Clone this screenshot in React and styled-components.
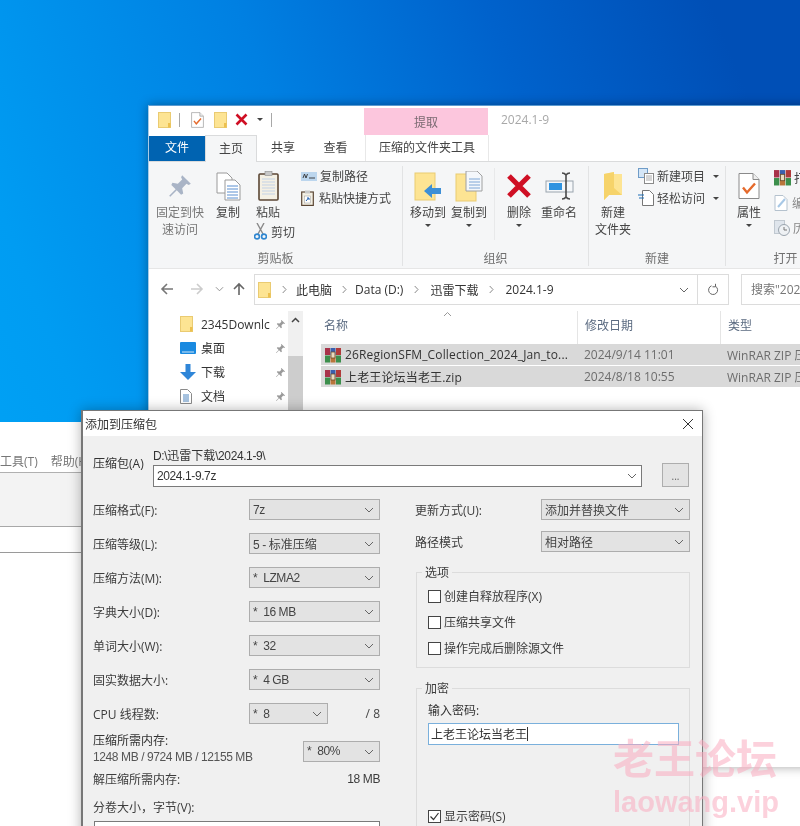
import { createGlobalStyle, styled } from 'styled-components'

const GlobalStyle = createGlobalStyle`
  html, body { margin: 0; padding: 0; background: #fff; }
  body { font-family: "Open Sans", "Noto Sans CJK SC", sans-serif; font-size: 12px; color: #333; }
  * { box-sizing: border-box; }
`

const Desktop = styled.div`
  position: relative;
  width: 800px;
  height: 826px;
  overflow: hidden;
  filter: blur(0.35px);
  background: linear-gradient(68deg, #00a8f8 0%, #009cf2 22%, #0080e2 50%, #0062cc 72%, #004fb6 92%);
`

/* windows sit on a free canvas, so these are the only placed boxes */
const BackWindow = styled.div`
  position: absolute;
  left: 0;
  top: 422px;
  width: 800px;
  height: 404px;
  background: #fff;
  padding-top: 30px;
`
const BackMenu = styled.div`
  display: flex;
  gap: 13px;
  height: 20px;
  line-height: 20px;
  color: #777;
  white-space: nowrap;
`
const BackToolbar = styled.div`
  height: 55px;
  background: #f3f3f3;
  border-top: 1px solid #b0b0b0;
  border-bottom: 1px solid #a8a8a8;
`
const BackInput = styled.div`
  height: 26px;
  border-bottom: 1px solid #9a9a9a;
`

const Explorer = styled.div`
  position: absolute;
  left: 148px;
  top: 105px;
  width: 700px;
  height: 662px;
  background: #fff;
  border-top: 1px solid #5b9ad0;
  border-left: 1px solid #a8cbe6;
  box-shadow: 0 0 10px rgba(0, 0, 0, 0.35);
`
const TitleRow = styled.div`
  display: flex;
  height: 29px;
`
const QuickBar = styled.div`
  width: 215px;
  display: flex;
  align-items: center;
  padding: 0 0 2px 9px;
`
const QuickItem = styled.span`
  display: flex;
  margin-left: ${p => p.$ml || 0}px;
`
const QuickSep = styled.span`
  width: 1px;
  height: 14px;
  background: #a8a8a8;
  margin-left: ${p => p.$ml}px;
`
const ExtractTab = styled.div`
  width: 124px;
  margin-top: 2px;
  background: #fcc6dd;
  color: #7a6a72;
  text-align: center;
  line-height: 29px;
`
const WindowTitle = styled.div`
  margin-left: 13px;
  line-height: 27px;
  color: #a8a8a8;
`
const TabRow = styled.div`
  display: flex;
  height: 26px;
`
const FileTab = styled.div`
  width: 56px;
  height: 25px;
  margin-top: 1px;
  background: #0063b1;
  color: #fff;
  text-align: center;
  line-height: 24px;
`
const Tab = styled.div`
  width: ${p => p.$w}px;
  margin-left: ${p => p.$ml || 0}px;
  text-align: center;
  line-height: 26px;
  color: #444;
  ${p => p.$active && 'background: #f5f6f7; border: 1px solid #dadbdc; border-bottom: 0; height: 27px;'}
  ${p => p.$tool && 'border-left: 1px solid #e8e8e8; border-right: 1px solid #e8e8e8;'}
`

const Ribbon = styled.div`
  display: flex;
  height: 108px;
  background: #f5f6f7;
  border-top: 1px solid #dadbdc;
  border-bottom: 1px solid #e6e6e6;
  padding-top: 4px;
`
const Group = styled.div`
  width: ${p => p.$w}px;
  height: 100px;
  flex-shrink: 0;
  border-right: 1px solid #e2e3e4;
  display: flex;
  flex-direction: column;
`
const GroupBody = styled.div`
  height: 85px;
  flex-shrink: 0;
  display: flex;
  padding: 2px 0 0 ${p => p.$pl || 0}px;
`
const GroupLabel = styled.div`
  line-height: 16px;
  text-align: center;
  color: #6f6f6f;
  white-space: nowrap;
`
const LargeButton = styled.div`
  width: ${p => p.$w}px;
  flex-shrink: 0;
  display: flex;
  flex-direction: column;
  align-items: center;
  text-align: center;
  line-height: 17px;
  color: ${p => (p.$off ? '#777' : '#444')};
  white-space: nowrap;
`
const IconBox = styled.div`
  height: 36px;
  width: 100%;
  display: flex;
  align-items: center;
  justify-content: center;
`
const Caret = styled.span`
  width: 0;
  height: 0;
  border-left: 3px solid transparent;
  border-right: 3px solid transparent;
  border-top: 3px solid #444;
  margin: ${p => p.$m || '0'};
  flex-shrink: 0;
`
const SoftSep = styled.div`
  width: 1px;
  height: 72px;
  background: #e8e9ea;
  margin: 0 4px 0 5px;
`
const PasteColumn = styled.div`
  width: 52px;
  flex-shrink: 0;
`
const SmallColumn = styled.div`
  margin: -3px 0 0 ${p => p.$ml || 0}px;
  display: flex;
  flex-direction: column;
`
const SmallRow = styled.div`
  height: ${p => p.$h || 22}px;
  display: flex;
  align-items: center;
  gap: ${p => p.$gap || 3}px;
  color: ${p => (p.$off ? '#888' : '#444')};
  white-space: nowrap;
`
const CutRow = styled(SmallRow)`
  margin: 2px 0 0 6px;
  height: 17px;
  gap: 4px;
`

const NavRow = styled.div`
  display: flex;
  height: 42px;
  padding-top: 5px;
`
const NavButtons = styled.div`
  width: 105px;
  height: 30px;
  flex-shrink: 0;
  display: flex;
  align-items: center;
  padding-left: 11px;
`
const NavIcon = styled.span`
  display: flex;
  margin-left: ${p => p.$ml || 0}px;
`
const AddressBar = styled.div`
  width: 444px;
  height: 31px;
  flex-shrink: 0;
  display: flex;
  align-items: center;
  border: 1px solid #dcdcdc;
  padding-left: 3px;
  color: #333;
  white-space: nowrap;
`
const Crumb = styled.span`
  margin-left: ${p => p.$ml}px;
`
const CrumbArrow = styled.svg`
  width: 5px;
  height: 9px;
  margin-left: ${p => p.$ml}px;
`
const AddressEnd = styled.div`
  margin-left: auto;
  width: 46px;
  height: 100%;
  display: flex;
  align-items: center;
  padding-left: 28px;
`
const RefreshBox = styled.div`
  width: 31px;
  height: 31px;
  flex-shrink: 0;
  display: flex;
  align-items: center;
  justify-content: center;
  border: 1px solid #dcdcdc;
  border-left: 0;
`
const SearchBox = styled.div`
  margin-left: 12px;
  width: 200px;
  height: 31px;
  flex-shrink: 0;
  border: 1px solid #dcdcdc;
  padding-left: 9px;
  line-height: 29px;
  color: #777;
`

const Main = styled.div`
  display: flex;
  height: 456px;
`
const NavPane = styled.div`
  width: 154px;
  display: flex;
  flex-shrink: 0;
`
const NavList = styled.div`
  width: 139px;
  padding: 1px 0 0 31px;
`
const NavItem = styled.div`
  height: 24px;
  display: grid;
  grid-template-columns: 21px 70px 1fr;
  align-items: center;
  color: #333;
`
const NavText = styled.span`
  overflow: hidden;
  white-space: nowrap;
`
const NavPin = styled.span`
  display: flex;
  justify-content: center;
  padding-left: 1px;
`
const Scrollbar = styled.div`
  width: 15px;
  background: #f0f0f0;
  padding-top: 6px;
`
const ScrollArrow = styled.svg`
  display: block;
  margin: 0 auto;
`
const ScrollThumb = styled.div`
  height: 90px;
  margin-top: 33px;
  background: #cdcdcd;
`
const FilePane = styled.div`
  margin-left: 18px;
  flex: 1;
`
const ColumnHead = styled.div`
  position: relative;
  display: grid;
  grid-template-columns: 256px 143px 1fr;
  height: 33px;
`
const HeadCell = styled.div`
  line-height: 30px;
  color: #5a6a80;
  padding-left: ${p => (p.$first ? 3 : 7)}px;
  ${p => !p.$first && 'border-left: 1px solid #e5e5e5;'}
`
const SortCaret = styled.svg`
  position: absolute;
  left: 122px;
  top: 0;
`
const FileRow = styled.div`
  display: grid;
  grid-template-columns: 256px 143px 1fr;
  align-items: center;
  height: 21px;
  margin-bottom: 1px;
  background: #d9d9d9;
  white-space: nowrap;
`
const FileName = styled.div`
  display: flex;
  align-items: center;
  gap: 4px;
  padding-left: 4px;
  color: #333;
  letter-spacing: 0.15px;
`
const FileMeta = styled.div`
  padding-left: 7px;
  color: #6d6d6d;
`

const Dialog = styled.div`
  position: absolute;
  left: 81px;
  top: 410px;
  width: 622px;
  height: 470px;
  background: #f0f0f0;
  border: 1px solid #777;
  border-left-width: 2px;
  box-shadow: 0 0 12px rgba(0, 0, 0, 0.3);
`
const DialogTitle = styled.div`
  height: 25px;
  background: #fff;
  display: flex;
  align-items: center;
  justify-content: space-between;
  padding: 0 8px 0 2px;
  color: #333;
`
const DialogBody = styled.div`
  padding: 11px 12px 0 10px;
`
/* the dialog's latin text runs narrower than the rest of the page */
const Num = styled.span`
  font-family: "Liberation Sans", sans-serif;
  font-size: 12px;
  letter-spacing: -0.4px;
`
const ArchiveHead = styled.div`
  display: flex;
  align-items: flex-end;
  margin-bottom: 12px;
`
const ArchiveLabel = styled.div`
  width: 60px;
  line-height: 17px;
  margin-bottom: 15px;
`
const ArchivePath = styled.div`
  width: 489px;
  line-height: 17px;
`
const PathText = styled.div`
  height: 18px;
`
const Field = styled.div`
  height: 22px;
  background: #fff;
  border: 1px solid #7a7a7a;
  display: flex;
  align-items: center;
  justify-content: space-between;
  padding: 0 4px 0 3px;
`
const BrowseButton = styled.div`
  width: 27px;
  height: 24px;
  margin-left: 20px;
  background: #e3e3e3;
  border: 1px solid #adadad;
  text-align: center;
  line-height: 24px;
  color: #666;
  font-size: 10px;
`
const Columns = styled.div`
  display: grid;
  grid-template-columns: 287px 275px;
  column-gap: 35px;
`
const OptionRow = styled.div`
  display: flex;
  align-items: center;
  height: 21px;
  margin-bottom: ${p => p.$mb ?? 13}px;
`
const OptionLabel = styled.div`
  width: ${p => p.$w}px;
  flex-shrink: 0;
  color: #3c3c3c;
`
const Select = styled.div`
  width: ${p => p.$w}px;
  height: 21px;
  flex-shrink: 0;
  background: #e3e3e3;
  border: 1px solid #adadad;
  display: flex;
  align-items: center;
  justify-content: space-between;
  padding: 0 5px 0 3px;
  color: #444;
  white-space: pre;
`
const ThreadMax = styled.div`
  margin-left: auto;
  color: #444;
`
const MemoryRow = styled.div`
  display: flex;
  justify-content: space-between;
  height: 31px;
  margin-top: -4px;
  line-height: 15.5px;
  white-space: nowrap;
`
const MemorySelect = styled(Select)`
  margin-top: 8px;
`
const MemoryValues = styled.div`
  color: #555;
`
const PlainRow = styled.div`
  display: flex;
  justify-content: space-between;
  line-height: 17px;
  margin-top: ${p => p.$mt}px;
  color: #3c3c3c;
`
const VolumeField = styled(Field)`
  margin: 5px 0 0 1px;
`
const Fieldset = styled.fieldset`
  margin: ${p => p.$mt}px 0 0 1px;
  padding: ${p => p.$pt}px 0 6px 11px;
  border: 1px solid #dcdcdc;
  min-width: 0;
`
const Legend = styled.legend`
  margin-left: -6px;
  padding: 0 3px;
  line-height: 17px;
  color: #3c3c3c;
`
const CheckRow = styled.div`
  display: flex;
  align-items: center;
  gap: 3px;
  height: 26px;
  margin-top: ${p => p.$mt || 0}px;
  color: #3c3c3c;
`
const CheckBox = styled.span`
  width: 13px;
  height: 13px;
  background: #fff;
  border: 1px solid #444;
  display: flex;
`
const PasswordLabel = styled.div`
  line-height: 16px;
  margin-bottom: 4px;
`
const PasswordField = styled.div`
  width: 251px;
  height: 22px;
  background: #fff;
  border: 1px solid #7ab0dc;
  display: flex;
  align-items: center;
  padding-left: 2px;
  color: #333;
`
const TextCaret = styled.span`
  width: 1px;
  height: 14px;
  background: #333;
`

const Watermark = styled.div`
  position: absolute;
  left: 613px;
  top: 733px;
  color: rgba(250, 172, 192, 0.55);
  font-weight: 700;
  white-space: nowrap;
`
const WatermarkCn = styled.div`
  font-size: 41px;
  line-height: 50px;
`
const WatermarkEn = styled.div`
  font-family: "Liberation Sans", sans-serif;
  font-size: 29px;
  line-height: 34px;
  margin-top: 2px;
`

function Folder({ w = 13, h = 16 }) {
  return (
    <svg width={w} height={h} viewBox="0 0 13 16">
      <rect x="0.5" y="0.5" width="12" height="15" fill="#fde493" stroke="#eacb72" />
      <path d="M10 15.5V11h2.5v4.5z" fill="#edc04e" />
    </svg>
  )
}

function Rar({ size = 16 }) {
  return (
    <svg width={size} height={size} viewBox="0 0 16 16">
      <rect x="0" y="1" width="5" height="7" fill="#a8324a" />
      <rect x="5.5" y="1" width="5" height="7" fill="#3a5fae" />
      <rect x="11" y="1" width="5" height="7" fill="#b03a3a" />
      <rect x="0" y="8.5" width="5" height="7" fill="#3c8f4c" />
      <rect x="5.5" y="8.5" width="5" height="7" fill="#b9753a" />
      <rect x="11" y="8.5" width="5" height="7" fill="#3c8f4c" />
      <rect x="6" y="5" width="4" height="6" fill="#e8dcc0" stroke="#6b4a2a" strokeWidth="0.8" />
    </svg>
  )
}

function RedX({ size = 13 }) {
  return (
    <svg width={size} height={size} viewBox="0 0 13 13">
      <path d="M1.5 1.5l10 10M11.5 1.5l-10 10" stroke="#cf0f24" strokeWidth="2.6" />
    </svg>
  )
}

function Check({ w = 13, h = 16 }) {
  return (
    <svg width={w} height={h} viewBox="0 0 22 27">
      <path d="M1 1h14l6 6v19H1z" fill="#fff" stroke="#8a8a8a" />
      <path d="M15 1v6h6" fill="#eee" stroke="#8a8a8a" />
      <path d="M5 15l4 5 8-9" fill="none" stroke="#e56a2c" strokeWidth="2.4" />
    </svg>
  )
}

function Pin({ size = 26, color = '#a9b4c6' }) {
  return (
    <svg width={size} height={size} viewBox="0 0 24 24">
      <path d="M14 2l8 8-2 1-2-1-4 4 1 5-2 1-4-4-6 6-1-1 6-6-4-4 1-2 5 1 4-4-1-2z" fill={color} />
    </svg>
  )
}

function MiniPin() {
  return <Pin size={11} color="#9a9a9a" />
}

function Pages() {
  return (
    <svg width="25" height="29" viewBox="0 0 25 29">
      <path d="M1 1h10l5 5v15H1z" fill="#fff" stroke="#9a9a9a" />
      <path d="M9 8h10l5 5v15H9z" fill="#fff" stroke="#9a9a9a" />
      <path d="M11 14h11M11 17h11M11 20h11M11 23h11M11 26h11" stroke="#5b8fd0" />
    </svg>
  )
}

function Clipboard() {
  return (
    <svg width="21" height="30" viewBox="0 0 21 30">
      <rect x="1" y="3" width="19" height="26" rx="1" fill="#f4f0e4" stroke="#5b4634" strokeWidth="1.6" />
      <rect x="7" y="0.5" width="7" height="4" fill="#c9c9c9" stroke="#8a8a8a" strokeWidth="0.6" />
      <path d="M4 8h13M4 11h13M4 14h13M4 17h13M4 20h13M4 23h13" stroke="#c3d2e6" />
    </svg>
  )
}

function Scissors() {
  return (
    <svg width="13" height="17" viewBox="0 0 13 17">
      <path d="M4 11L10 0M9 11L3 0" stroke="#8a8a8a" strokeWidth="1.4" fill="none" />
      <circle cx="3" cy="13.5" r="2.4" fill="none" stroke="#2f86d0" strokeWidth="1.6" />
      <circle cx="10" cy="13.5" r="2.4" fill="none" stroke="#2f86d0" strokeWidth="1.6" />
    </svg>
  )
}

function PathIcon() {
  return (
    <svg width="16" height="9" viewBox="0 0 16 9">
      <rect width="16" height="9" fill="#bcd6ee" />
      <path d="M2 6l1.5-4 1.5 4 1.5-4M8 6h6" stroke="#333" strokeWidth="0.9" fill="none" />
    </svg>
  )
}

function ShortcutIcon() {
  return (
    <svg width="13" height="16" viewBox="0 0 13 16">
      <rect x="0.7" y="2" width="11.6" height="13.4" fill="#f4f0e4" stroke="#5b4634" strokeWidth="1.2" />
      <rect x="4" y="0.5" width="5" height="3" fill="#c9c9c9" />
      <rect x="3.5" y="6" width="6" height="7" fill="#fff" stroke="#999" strokeWidth="0.5" />
      <path d="M5 11l2.5-3M6 8h2v2" stroke="#1f5fb0" fill="none" />
    </svg>
  )
}

function MoveTo() {
  return (
    <svg width="28" height="29" viewBox="0 0 28 29">
      <rect x="1" y="1" width="20" height="27" fill="#fde493" stroke="#eacb72" />
      <path d="M10 19l8-7v4h9v6h-9v4z" fill="#3d8fd6" />
    </svg>
  )
}

function CopyTo() {
  return (
    <svg width="28" height="31" viewBox="0 0 28 31">
      <rect x="1" y="3" width="20" height="27" fill="#fde493" stroke="#eacb72" />
      <path d="M11 0h11l5 5v15H11z" fill="#f4f7fb" stroke="#a0a0a0" />
      <path d="M14 8h11M14 11h11M14 14h11M14 17h11" stroke="#7ea6d6" />
    </svg>
  )
}

function Rename() {
  return (
    <svg width="29" height="28" viewBox="0 0 29 28">
      <rect x="1" y="9" width="27" height="11" fill="#f5f7f9" stroke="#9aa4ae" />
      <rect x="4" y="11" width="13" height="7" fill="#2f93e0" />
      <path d="M17 1c2 0 3 .5 4 2 1-1.500 2-2 4-2M21 3v22M17 27c2 0 3-.5 4-2 1 1.500 2 2 4 2" fill="none" stroke="#4a4a4a" strokeWidth="1.6" />
    </svg>
  )
}

function NewFolder() {
  return (
    <svg width="18" height="28" viewBox="0 0 18 28">
      <path d="M0 2l10-2v2h8v21H5l-5 5z" fill="#fde493" />
      <path d="M10 0v16l8 7H5l-5 5V2z" fill="#f6d36a" />
    </svg>
  )
}

function NewItem() {
  return (
    <svg width="16" height="16" viewBox="0 0 16 16">
      <rect x="0.5" y="0.5" width="9" height="9" fill="#d4e6f7" stroke="#6f9cc8" />
      <rect x="6.5" y="5.500" width="9" height="10" fill="#fff" stroke="#8a8a8a" />
      <path d="M8 8h6M8 10h6M8 12h6" stroke="#aaa" />
    </svg>
  )
}

function EasyAccess() {
  return (
    <svg width="16" height="16" viewBox="0 0 16 16">
      <path d="M4.500 0.500h7l4 4v11h-11z" fill="#fff" stroke="#777" />
      <path d="M0 5h6M1 8h5" stroke="#1f6fb8" strokeWidth="1.2" />
    </svg>
  )
}

function EditIcon() {
  return (
    <svg width="15" height="16" viewBox="0 0 15 16">
      <path d="M1 .5h8l4 4v11H1z" fill="#fff" stroke="#b5c2ce" />
      <path d="M4 12l7-8" stroke="#a8c8e6" strokeWidth="2" />
    </svg>
  )
}

function HistoryIcon() {
  return (
    <svg width="16" height="16" viewBox="0 0 16 16">
      <rect x="0.500" y="0.500" width="10" height="13" fill="#dfe5ec" stroke="#c0c8d0" />
      <circle cx="10" cy="10" r="5.500" fill="#eef1f4" stroke="#9aa4ae" />
      <path d="M10 7v3h3" stroke="#777" fill="none" />
    </svg>
  )
}

function Chevron({ color = '#666', w = 10 }) {
  return (
    <svg width={w} height="6" viewBox="0 0 10 6">
      <path d="M1 1l4 4 4-4" fill="none" stroke={color} />
    </svg>
  )
}

function Arrow({ d, color }) {
  return (
    <svg width="14" height="14" viewBox="0 0 14 14">
      <path d={d} fill="none" stroke={color} strokeWidth="1.6" />
    </svg>
  )
}

function Monitor() {
  return (
    <svg width="16" height="12" viewBox="0 0 16 12">
      <rect width="16" height="12" rx="1" fill="#1a8ae0" />
      <path d="M2 10h12" stroke="#cfe6f8" />
    </svg>
  )
}

function DownArrow() {
  return (
    <svg width="16" height="16" viewBox="0 0 16 16">
      <path d="M5.500 0h5v8H16l-8 8-8-8h5.500z" fill="#2f86d8" />
    </svg>
  )
}

function DocIcon() {
  return (
    <svg width="12" height="15" viewBox="0 0 12 15">
      <path d="M.5.500h7l4 4v10H.5z" fill="#fff" stroke="#8a8a8a" />
      <path d="M3 6h6M3 8h6M3 10h6M3 12h6" stroke="#4f86c0" />
    </svg>
  )
}

function CrumbSep({ ml }) {
  return (
    <CrumbArrow $ml={ml} viewBox="0 0 5 9">
      <path d="M.7 1l3.300 3.500L.7 8" fill="none" stroke="#888" />
    </CrumbArrow>
  )
}

const sizeRows = [
  ['压缩格式(F):', <Num key="v">7z</Num>],
  ['压缩等级(L):', <span key="v"><Num>5 - </Num>标准压缩</span>],
  ['压缩方法(M):', <Num key="v">*  LZMA2</Num>],
  ['字典大小(D):', <Num key="v">*  16 MB</Num>],
  ['单词大小(W):', <Num key="v">*  32</Num>],
  ['固实数据大小:', <Num key="v">*  4 GB</Num>],
]

const navItems = [
  ['2345Downlc', <Folder key="f" />],
  ['桌面', <Monitor key="m" />],
  ['下载', <DownArrow key="d" />],
  ['文档', <DocIcon key="c" />],
]

const files = [
  ['26RegionSFM_Collection_2024_Jan_to...', '2024/9/14 11:01'],
  ['上老王论坛当老王.zip', '2024/8/18 10:55'],
]

export default function App() {
  return (
    <>
      <GlobalStyle />
      <Desktop>
        <BackWindow>
          <BackMenu>
            <span>工具(T)</span>
            <span>帮助(H)</span>
          </BackMenu>
          <BackToolbar />
          <BackInput />
        </BackWindow>

        <Explorer>
          <TitleRow>
            <QuickBar>
              <QuickItem><Folder /></QuickItem>
              <QuickSep $ml={8} />
              <QuickItem $ml={11}><Check /></QuickItem>
              <QuickItem $ml={10}><Folder /></QuickItem>
              <QuickItem $ml={8}><RedX /></QuickItem>
              <QuickItem $ml={8}><Caret $m="0 0 0 1px" /></QuickItem>
              <QuickSep $ml={8} />
            </QuickBar>
            <ExtractTab>提取</ExtractTab>
            <WindowTitle>2024.1-9</WindowTitle>
          </TitleRow>
          <TabRow>
            <FileTab>文件</FileTab>
            <Tab $w={52} $active>主页</Tab>
            <Tab $w={52}>共享</Tab>
            <Tab $w={53}>查看</Tab>
            <Tab $w={124} $ml={3} $tool>压缩的文件夹工具</Tab>
          </TabRow>

          <Ribbon>
            <Group $w={254}>
              <GroupBody $pl={3}>
                <LargeButton $w={56} $off>
                  <IconBox><Pin /></IconBox>
                  固定到快<br />速访问
                </LargeButton>
                <LargeButton $w={40}>
                  <IconBox><Pages /></IconBox>
                  复制
                </LargeButton>
                <PasteColumn>
                  <LargeButton $w={40}>
                    <IconBox><Clipboard /></IconBox>
                    粘贴
                  </LargeButton>
                  <CutRow><Scissors />剪切</CutRow>
                </PasteColumn>
                <SmallColumn $ml={1}>
                  <SmallRow><PathIcon />复制路径</SmallRow>
                  <SmallRow $gap={5}><ShortcutIcon />粘贴快捷方式</SmallRow>
                </SmallColumn>
              </GroupBody>
              <GroupLabel>剪贴板</GroupLabel>
            </Group>

            <Group $w={186}>
              <GroupBody $pl={4}>
                <LargeButton $w={42}>
                  <IconBox><MoveTo /></IconBox>
                  移动到
                  <Caret $m="3px 0 0" />
                </LargeButton>
                <LargeButton $w={40}>
                  <IconBox><CopyTo /></IconBox>
                  复制到
                  <Caret $m="3px 0 0" />
                </LargeButton>
                <SoftSep />
                <LargeButton $w={40}>
                  <IconBox><RedX size={26} /></IconBox>
                  删除
                  <Caret $m="3px 0 0" />
                </LargeButton>
                <LargeButton $w={40}>
                  <IconBox><Rename /></IconBox>
                  重命名
                </LargeButton>
              </GroupBody>
              <GroupLabel>组织</GroupLabel>
            </Group>

            <Group $w={137}>
              <GroupBody $pl={2}>
                <LargeButton $w={44}>
                  <IconBox><NewFolder /></IconBox>
                  新建<br />文件夹
                </LargeButton>
                <SmallColumn $ml={3}>
                  <SmallRow><NewItem />新建项目<Caret $m="0 0 0 5px" /></SmallRow>
                  <SmallRow><EasyAccess />轻松访问<Caret $m="0 0 0 5px" /></SmallRow>
                </SmallColumn>
              </GroupBody>
              <GroupLabel>新建</GroupLabel>
            </Group>

            <Group $w={120}>
              <GroupBody $pl={3}>
                <LargeButton $w={40}>
                  <IconBox><Check w={22} h={28} /></IconBox>
                  属性
                  <Caret $m="3px 0 0" />
                </LargeButton>
                <SmallColumn $ml={5}>
                  <SmallRow $h={25}><Rar size={17} />打开</SmallRow>
                  <SmallRow $h={25} $off><EditIcon />编辑</SmallRow>
                  <SmallRow $h={25} $off><HistoryIcon />历史记录</SmallRow>
                </SmallColumn>
              </GroupBody>
              <GroupLabel>打开</GroupLabel>
            </Group>
          </Ribbon>

          <NavRow>
            <NavButtons>
              <NavIcon><Arrow d="M13 7H2M7 2L2 7l5 5" color="#777" /></NavIcon>
              <NavIcon $ml={16}><Arrow d="M1 7h11M7 2l5 5-5 5" color="#ccc" /></NavIcon>
              <NavIcon $ml={11}><Chevron color="#888" w={9} /></NavIcon>
              <NavIcon $ml={8}><Arrow d="M7 13V2M2 7l5-5 5 5" color="#666" /></NavIcon>
            </NavButtons>
            <AddressBar>
              <Folder />
              <CrumbSep ml={11} />
              <Crumb $ml={9}>此电脑</Crumb>
              <CrumbSep ml={10} />
              <Crumb $ml={8}>Data (D:)</Crumb>
              <CrumbSep ml={11} />
              <Crumb $ml={11}>迅雷下载</Crumb>
              <CrumbSep ml={11} />
              <Crumb $ml={11}>2024.1-9</Crumb>
              <AddressEnd><Chevron /></AddressEnd>
            </AddressBar>
            <RefreshBox>
              <svg width="12" height="13" viewBox="0 0 12 13">
                <path d="M8.500 3.200a4.500 4.500 0 1 1-4-.4M8.500 .8v3h-3" fill="none" stroke="#666" />
              </svg>
            </RefreshBox>
            <SearchBox>搜索"2024.1-9"</SearchBox>
          </NavRow>

          <Main>
            <NavPane>
              <NavList>
                {navItems.map(([label, icon]) => (
                  <NavItem key={label}>
                    {icon}
                    <NavText>{label}</NavText>
                    <NavPin><MiniPin /></NavPin>
                  </NavItem>
                ))}
              </NavList>
              <Scrollbar>
                <ScrollArrow width="9" height="6" viewBox="0 0 9 6">
                  <path d="M1 5l3.500-3.500L8 5" fill="none" stroke="#444" strokeWidth="1.500" />
                </ScrollArrow>
                <ScrollThumb />
              </Scrollbar>
            </NavPane>
            <FilePane>
              <ColumnHead>
                <HeadCell $first>名称</HeadCell>
                <HeadCell>修改日期</HeadCell>
                <HeadCell>类型</HeadCell>
                <SortCaret width="9" height="6" viewBox="0 0 9 6">
                  <path d="M1 5l3.500-3.500L8 5" fill="none" stroke="#999" />
                </SortCaret>
              </ColumnHead>
              {files.map(([name, date]) => (
                <FileRow key={name}>
                  <FileName><Rar />{name}</FileName>
                  <FileMeta>{date}</FileMeta>
                  <FileMeta>WinRAR ZIP 压缩文件</FileMeta>
                </FileRow>
              ))}
            </FilePane>
          </Main>
        </Explorer>

        <Dialog>
          <DialogTitle>
            添加到压缩包
            <svg width="12" height="12" viewBox="0 0 12 12">
              <path d="M1 1l10 10M11 1L1 11" stroke="#333" />
            </svg>
          </DialogTitle>
          <DialogBody>
            <ArchiveHead>
              <ArchiveLabel>压缩包(A)</ArchiveLabel>
              <ArchivePath>
                <PathText><Num>D:\</Num>迅雷下载<Num>\2024.1-9\</Num></PathText>
                <Field><Num>2024.1-9.7z</Num><Chevron /></Field>
              </ArchivePath>
              <BrowseButton>...</BrowseButton>
            </ArchiveHead>
            <Columns>
              <div>
                {sizeRows.map(([label, value]) => (
                  <OptionRow key={label}>
                    <OptionLabel $w={156}>{label}</OptionLabel>
                    <Select $w={131}>{value}<Chevron /></Select>
                  </OptionRow>
                ))}
                <OptionRow>
                  <OptionLabel $w={156}>CPU 线程数:</OptionLabel>
                  <Select $w={79}><Num>*  8</Num><Chevron /></Select>
                  <ThreadMax>/ 8</ThreadMax>
                </OptionRow>
                <MemoryRow>
                  <div>
                    压缩所需内存:
                    <MemoryValues><Num>1248 MB / 9724 MB / 12155 MB</Num></MemoryValues>
                  </div>
                  <MemorySelect $w={77}><Num>*  80%</Num><Chevron /></MemorySelect>
                </MemoryRow>
                <PlainRow $mt={7}>
                  <span>解压缩所需内存:</span>
                  <Num>18 MB</Num>
                </PlainRow>
                <PlainRow $mt={11}>分卷大小，字节(V):</PlainRow>
                <VolumeField />
              </div>
              <div>
                <OptionRow $mb={11}>
                  <OptionLabel $w={126}>更新方式(U):</OptionLabel>
                  <Select $w={149}>添加并替换文件<Chevron /></Select>
                </OptionRow>
                <OptionRow $mb={0}>
                  <OptionLabel $w={126}>路径模式</OptionLabel>
                  <Select $w={149}>相对路径<Chevron /></Select>
                </OptionRow>
                <Fieldset $mt={12} $pt={2}>
                  <Legend>选项</Legend>
                  <CheckRow><CheckBox />创建自释放程序(X)</CheckRow>
                  <CheckRow><CheckBox />压缩共享文件</CheckRow>
                  <CheckRow><CheckBox />操作完成后删除源文件</CheckRow>
                </Fieldset>
                <Fieldset $mt={12} $pt={6}>
                  <Legend>加密</Legend>
                  <PasswordLabel>输入密码:</PasswordLabel>
                  <PasswordField>上老王论坛当老王<TextCaret /></PasswordField>
                  <CheckRow $mt={58}>
                    <CheckBox>
                      <svg width="11" height="11" viewBox="0 0 11 11">
                        <path d="M1.500 5.500l3 3 5-6.500" fill="none" stroke="#333" strokeWidth="1.200" />
                      </svg>
                    </CheckBox>
                    显示密码(S)
                  </CheckRow>
                </Fieldset>
              </div>
            </Columns>
          </DialogBody>
        </Dialog>

        <Watermark>
          <WatermarkCn>老王论坛</WatermarkCn>
          <WatermarkEn>laowang.vip</WatermarkEn>
        </Watermark>
      </Desktop>
    </>
  )
}
